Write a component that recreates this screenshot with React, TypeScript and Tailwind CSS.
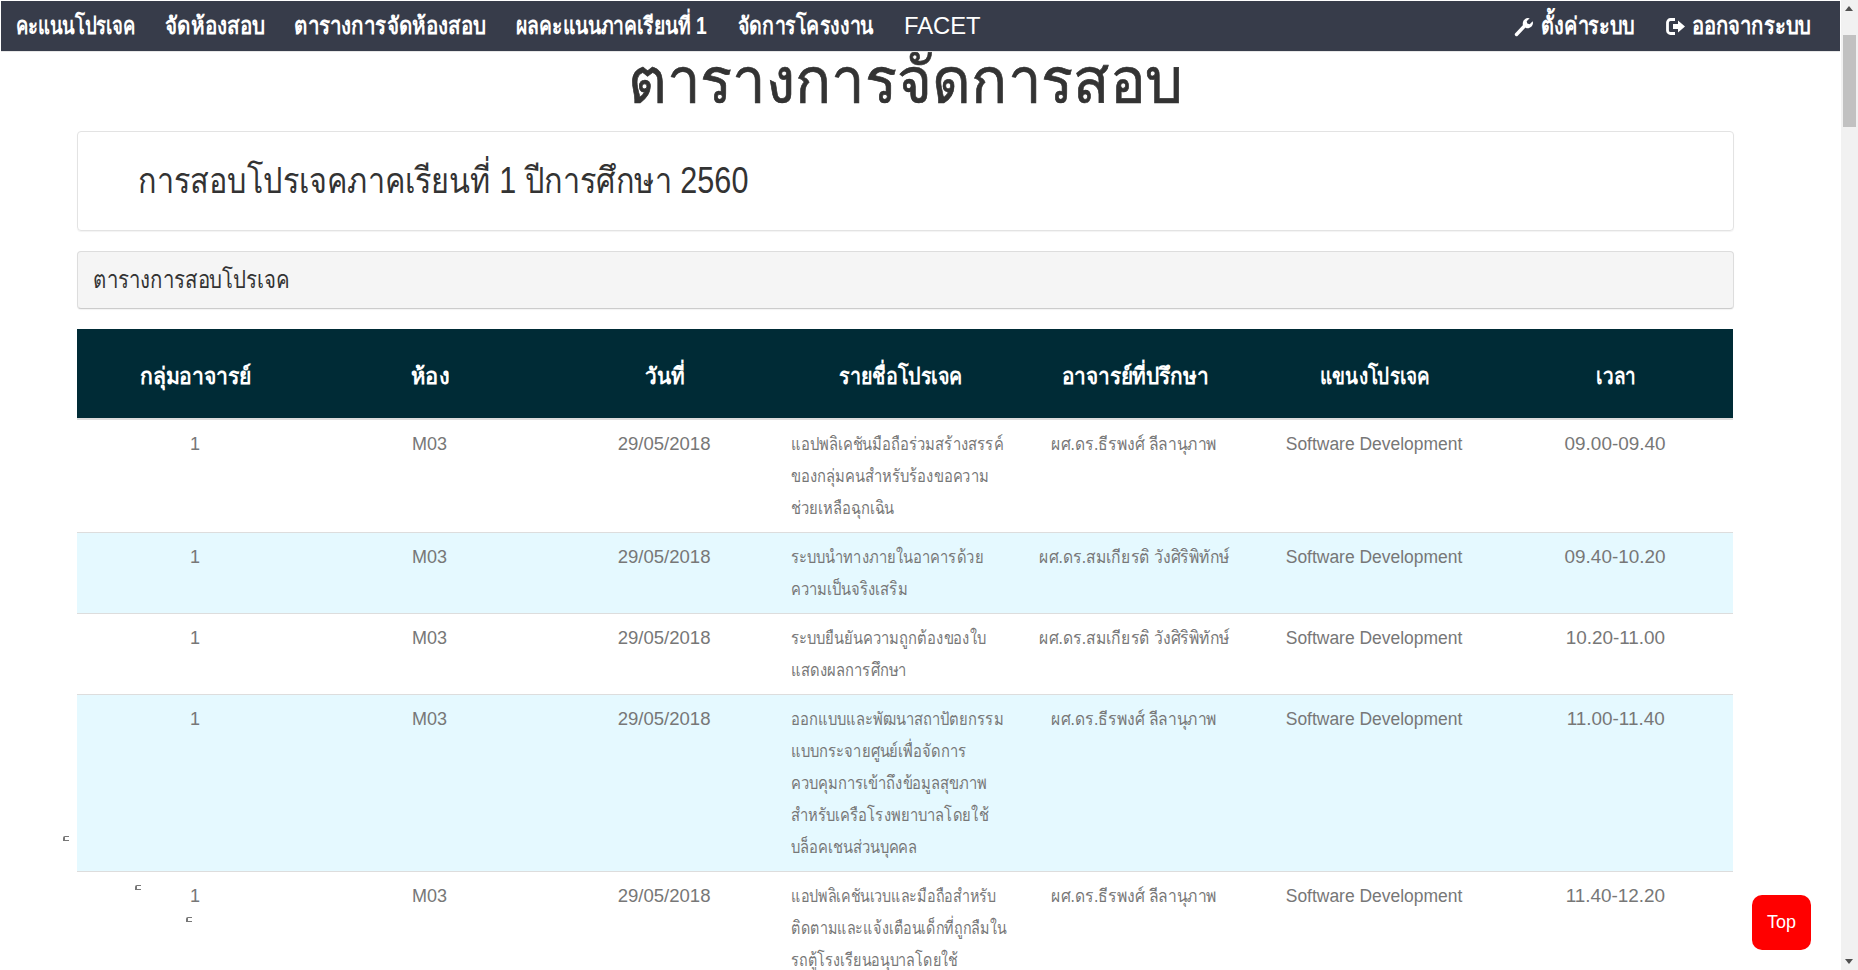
import React from 'react';

const NAV_LINKS = [
  { label: 'คะแนนโปรเจค', box: 'w-[119px] font-semibold', squeeze: 'scale-x-[.77]' },
  { label: 'จัดห้องสอบ', box: 'w-[99px] font-semibold', squeeze: 'scale-x-[.86]' },
  { label: 'ตารางการจัดห้องสอบ', box: 'w-[192px] font-semibold', squeeze: 'scale-x-[.857]' },
  { label: 'ผลคะแนนภาคเรียนที่ 1', box: 'w-[192px] font-semibold', squeeze: 'scale-x-[.805]' },
  { label: 'จัดการโครงงาน', box: 'w-[136px] font-semibold', squeeze: 'scale-x-[.815]' },
  { label: 'FACET', box: 'w-[76px] font-normal', squeeze: 'scale-x-[.99]' },
];

const COLUMNS = [
  { label: 'กลุ่มอาจารย์', width: 'w-[236px]', squeeze: 'scale-x-[.92]' },
  { label: 'ห้อง', width: 'w-[233px]', squeeze: 'scale-x-[.95]' },
  { label: 'วันที่', width: 'w-[237px]', squeeze: 'scale-x-[.9]' },
  { label: 'รายชื่อโปรเจค', width: 'w-[235px]', squeeze: 'scale-x-[.855]' },
  { label: 'อาจารย์ที่ปรึกษา', width: 'w-[233px]', squeeze: 'scale-x-[.905]' },
  { label: 'แขนงโปรเจค', width: 'w-[247px]', squeeze: 'scale-x-[.82]' },
  { label: 'เวลา', width: 'w-[235px]', squeeze: 'scale-x-[.82]' },
];

const ROWS = [
  {
    title: ['แอปพลิเคชันมือถือร่วมสร้างสรรค์', 'ของกลุ่มคนสำหรับร้องขอความ', 'ช่วยเหลือฉุกเฉิน'],
    squeeze: 'scale-x-[.82]',
    advisor: 'ผศ.ดร.ธีรพงศ์ ลีลานุภาพ',
    time: '09.00-09.40',
  },
  {
    title: ['ระบบนำทางภายในอาคารด้วย', 'ความเป็นจริงเสริม'],
    squeeze: 'scale-x-[.82]',
    advisor: 'ผศ.ดร.สมเกียรติ วังศิริพิทักษ์',
    time: '09.40-10.20',
  },
  {
    title: ['ระบบยืนยันความถูกต้องของใบ', 'แสดงผลการศึกษา'],
    squeeze: 'scale-x-[.82]',
    advisor: 'ผศ.ดร.สมเกียรติ วังศิริพิทักษ์',
    time: '10.20-11.00',
  },
  {
    title: ['ออกแบบและพัฒนาสถาปัตยกรรม', 'แบบกระจายศูนย์เพื่อจัดการ', 'ควบคุมการเข้าถึงข้อมูลสุขภาพ', 'สำหรับเครือโรงพยาบาลโดยใช้', 'บล็อคเชนส่วนบุคคล'],
    squeeze: 'scale-x-[.82]',
    advisor: 'ผศ.ดร.ธีรพงศ์ ลีลานุภาพ',
    time: '11.00-11.40',
  },
  {
    title: ['แอปพลิเคชันเวบและมือถือสำหรับ', 'ติดตามและแจ้งเตือนเด็กที่ถูกลืมใน', 'รถตู้โรงเรียนอนุบาลโดยใช้'],
    squeeze: 'scale-x-[.795]',
    advisor: 'ผศ.ดร.ธีรพงศ์ ลีลานุภาพ',
    time: '11.40-12.20',
  },
];

const WrenchIcon = () => (
  <svg width="21" height="21" viewBox="0 0 21 21" className="shrink-0">
    <path d="M2.5 18.5 10.5 10" stroke="white" strokeWidth="3.4" strokeLinecap="round" />
    <path d="M9 9.5C8 6 10 2.5 13.5 2l2.2.2-3 3 .6 2.4 2.4.6 3-3 .3 1.8c-.2 3.6-3.6 6-7 5z" fill="white" />
  </svg>
);

const LogOutIcon = () => (
  <svg width="21" height="21" viewBox="0 0 21 21" className="shrink-0">
    <path d="M10 3.5H5.5a3 3 0 0 0-3 3v8a3 3 0 0 0 3 3H10" stroke="white" strokeWidth="2.8" fill="none" />
    <path d="M8 8h5V4.5l7 6-7 6V13H8z" fill="white" />
  </svg>
);

export default function App() {
  return (
    <div className="relative h-[970px] w-full overflow-hidden bg-white font-['Liberation_Sans',sans-serif] text-[#333]">
      <div className="h-full w-[1841px] overflow-hidden">
        <nav className="absolute left-[1px] top-[1px] z-10 flex h-[51px] w-[1839px] items-center justify-between border-b border-[#e7e7e7] bg-[#373c4a] pl-[15px] pr-[30px] text-[24px] text-white">
          <div className="flex gap-[30px]">
            {NAV_LINKS.map((link) => (
              <a key={link.label} href="#" className={`block whitespace-nowrap ${link.box}`}>
                <span className={`inline-block origin-left ${link.squeeze}`}>{link.label}</span>
              </a>
            ))}
          </div>
          <div className="flex gap-[30px] font-semibold">
            <a href="#" className="flex w-[121px] items-center gap-[6px] whitespace-nowrap">
              <WrenchIcon />
              <span className="inline-block origin-left scale-x-[.83]">ตั้งค่าระบบ</span>
            </a>
            <a href="#" className="flex w-[145px] items-center gap-[6px] whitespace-nowrap">
              <LogOutIcon />
              <span className="inline-block origin-left scale-x-[.845]">ออกจากระบบ</span>
            </a>
          </div>
        </nav>

        <div className="ml-[77px] w-[1657px]">
          <h1 className="mt-[43px] text-center text-[64px] font-normal leading-[76px] [-webkit-text-stroke:0.7px_#333]">
            <span className="inline-block scale-x-[.934] whitespace-nowrap">ตารางการจัดการสอบ</span>
          </h1>

          <div className="mt-[12px] flex h-[100px] items-center rounded-[4px] border border-[#e3e3e3] pl-[60px] text-[36px] shadow-[0_1px_1px_rgba(0,0,0,0.05)]">
            <span className="inline-block origin-left scale-x-[.85] whitespace-nowrap">การสอบโปรเจคภาคเรียนที่ 1 ปีการศึกษา 2560</span>
          </div>
          <div className="mt-[20px] flex h-[58px] items-center rounded-[4px] border border-[#ddd] border-b-[#ccc] bg-[#f5f5f5] pl-[15px] text-[24px] shadow-[0_1px_1px_rgba(0,0,0,0.05)]">
            <span className="inline-block origin-left scale-x-[.85] whitespace-nowrap">ตารางการสอบโปรเจค</span>
          </div>

          <table className="mt-[20px] w-[1656px] table-fixed border-collapse text-center text-[18px] leading-[32px] text-[#777]">
            <thead>
              <tr className="h-[90px] border-b-2 border-[#ddd] bg-[#002b36] text-[23px] text-white">
                {COLUMNS.map((col) => (
                  <th key={col.label} className={`${col.width} pt-[5px] font-semibold`}>
                    <span className={`inline-block whitespace-nowrap ${col.squeeze}`}>{col.label}</span>
                  </th>
                ))}
              </tr>
            </thead>
            <tbody>
              {ROWS.map((row, i) => (
                <tr key={row.time} className={`border-b border-[#ddd] align-top ${i % 2 === 1 ? 'bg-[#e5f9ff]' : 'bg-white'}`}>
                  <td className="p-[8px]">1</td>
                  <td className="p-[8px]">M03</td>
                  <td className="p-[8px]">
                    <span className="inline-block scale-x-[1.03]">29/05/2018</span>
                  </td>
                  <td className="p-[8px] text-left">
                    {row.title.map((line) => (
                      <div key={line} className={`origin-left whitespace-nowrap ${row.squeeze}`}>{line}</div>
                    ))}
                  </td>
                  <td className="py-[8px]">
                    <span className="inline-block scale-x-[.87] whitespace-nowrap">{row.advisor}</span>
                  </td>
                  <td className="p-[8px]">
                    <span className="inline-block scale-x-[.97] whitespace-nowrap">Software Development</span>
                  </td>
                  <td className="p-[8px]">
                    <span className="inline-block scale-x-[1.05]">{row.time}</span>
                  </td>
                </tr>
              ))}
            </tbody>
          </table>
        </div>
      </div>

      {/* stray marks seen in the page */}
      <span className="absolute left-[63px] top-[836px] h-[5px] w-[6px] rounded-tl-[2px] border-y border-l-2 border-[#777]" />
      <span className="absolute left-[135px] top-[885px] h-[5px] w-[6px] rounded-tl-[2px] border-y border-l-2 border-[#777]" />
      <span className="absolute left-[186px] top-[917px] h-[5px] w-[6px] rounded-tl-[2px] border-y border-l-2 border-[#777]" />

      <a href="#" className="absolute left-[1752px] top-[895px] flex h-[55px] w-[59px] items-center justify-center rounded-[10px] bg-[#ff0000] text-[18px] text-white">Top</a>

      {/* scrollbar */}
      <div className="absolute right-0 top-0 h-full w-[17px] bg-[#f1f1f1]">
        <div className="absolute left-[4px] top-[6px] h-0 w-0 border-x-[4.5px] border-b-[5px] border-x-transparent border-b-[#505050]" />
        <div className="absolute left-[2px] top-[35px] h-[92px] w-[13px] bg-[#c1c1c1]" />
        <div className="absolute bottom-[6px] left-[4px] h-0 w-0 border-x-[4.5px] border-t-[5px] border-x-transparent border-t-[#505050]" />
      </div>
    </div>
  );
}
